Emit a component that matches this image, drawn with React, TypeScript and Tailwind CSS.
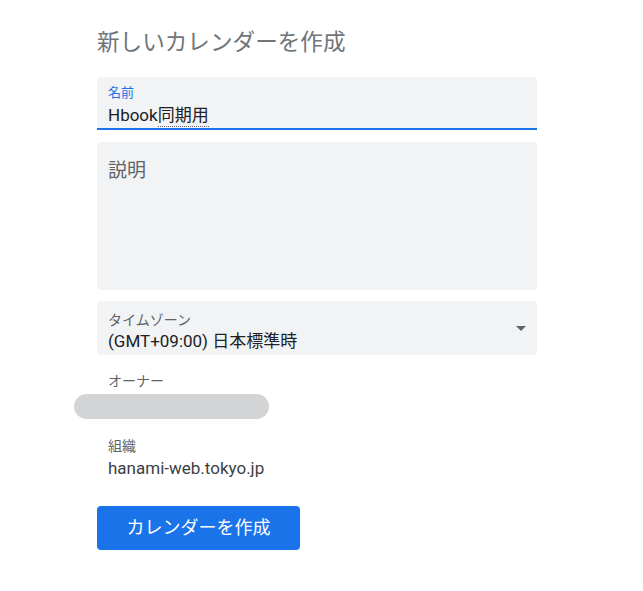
export default function App() {
  const font = "font-['Roboto','Noto_Sans_CJK_JP',sans-serif]"

  return (
    <div className={`min-h-screen bg-white ${font}`}>
      <div className="ml-[97px] w-[440px] pt-[29px] flex flex-col">
        <h1 className="text-[22.6px] leading-[28px] text-[#70757a] font-normal">新しいカレンダーを作成</h1>

        {/* 名前 */}
        <div className="mt-[20px] h-[53px] bg-[#f1f3f4] rounded-t-[4px] border-b-2 border-[#1a73e8] px-[11px] pt-[8px] box-border">
          <div className="text-[13px] leading-[16px] text-[#1a73e8]">名前</div>
          <div className="mt-[2px] text-[17px] leading-[24px] text-[#202124]">
            Hbook<span className="border-b border-dotted border-[#5f6368] pb-[1px]">同期用</span>
          </div>
        </div>

        {/* 説明 */}
        <div className="mt-[12px] h-[148px] bg-[#f1f3f4] rounded-[4px] px-[11px] pt-[16px]">
          <div className="text-[19px] leading-[26px] text-[#5f6368]">説明</div>
        </div>

        {/* タイムゾーン */}
        <div className="mt-[11px] h-[54px] bg-[#f1f3f4] rounded-[4px] px-[11px] pt-[10px] flex justify-between">
          <div>
            <div className="text-[14px] leading-[18px] text-[#5f6368]">タイムゾーン</div>
            <div className="text-[17px] leading-[24px] text-[#202124]">(GMT+09:00) 日本標準時</div>
          </div>
          <svg width="10" height="5" viewBox="0 0 10 5" className="mt-[15px]">
            <path d="M0 0 L10 0 L5 5 Z" fill="#5f6368" />
          </svg>
        </div>

        {/* オーナー */}
        <div className="mt-[17px] px-[11px] text-[14px] leading-[18px] text-[#5f6368]">オーナー</div>
        <div className="mt-[4px] -ml-[23px] w-[195px] h-[25px] rounded-full bg-[#d3d4d5]" />

        {/* 組織 */}
        <div className="mt-[18px] px-[11px] text-[14px] leading-[18px] text-[#5f6368]">組織</div>
        <div className="mt-[2px] px-[11px] text-[17px] leading-[22px] text-[#3c4043]">hanami-web.tokyo.jp</div>

        <button className="mt-[27px] w-[203px] h-[44px] rounded-[4px] bg-[#1a73e8] text-white text-[18px] leading-[24px]">
          カレンダーを作成
        </button>
      </div>
    </div>
  )
}
